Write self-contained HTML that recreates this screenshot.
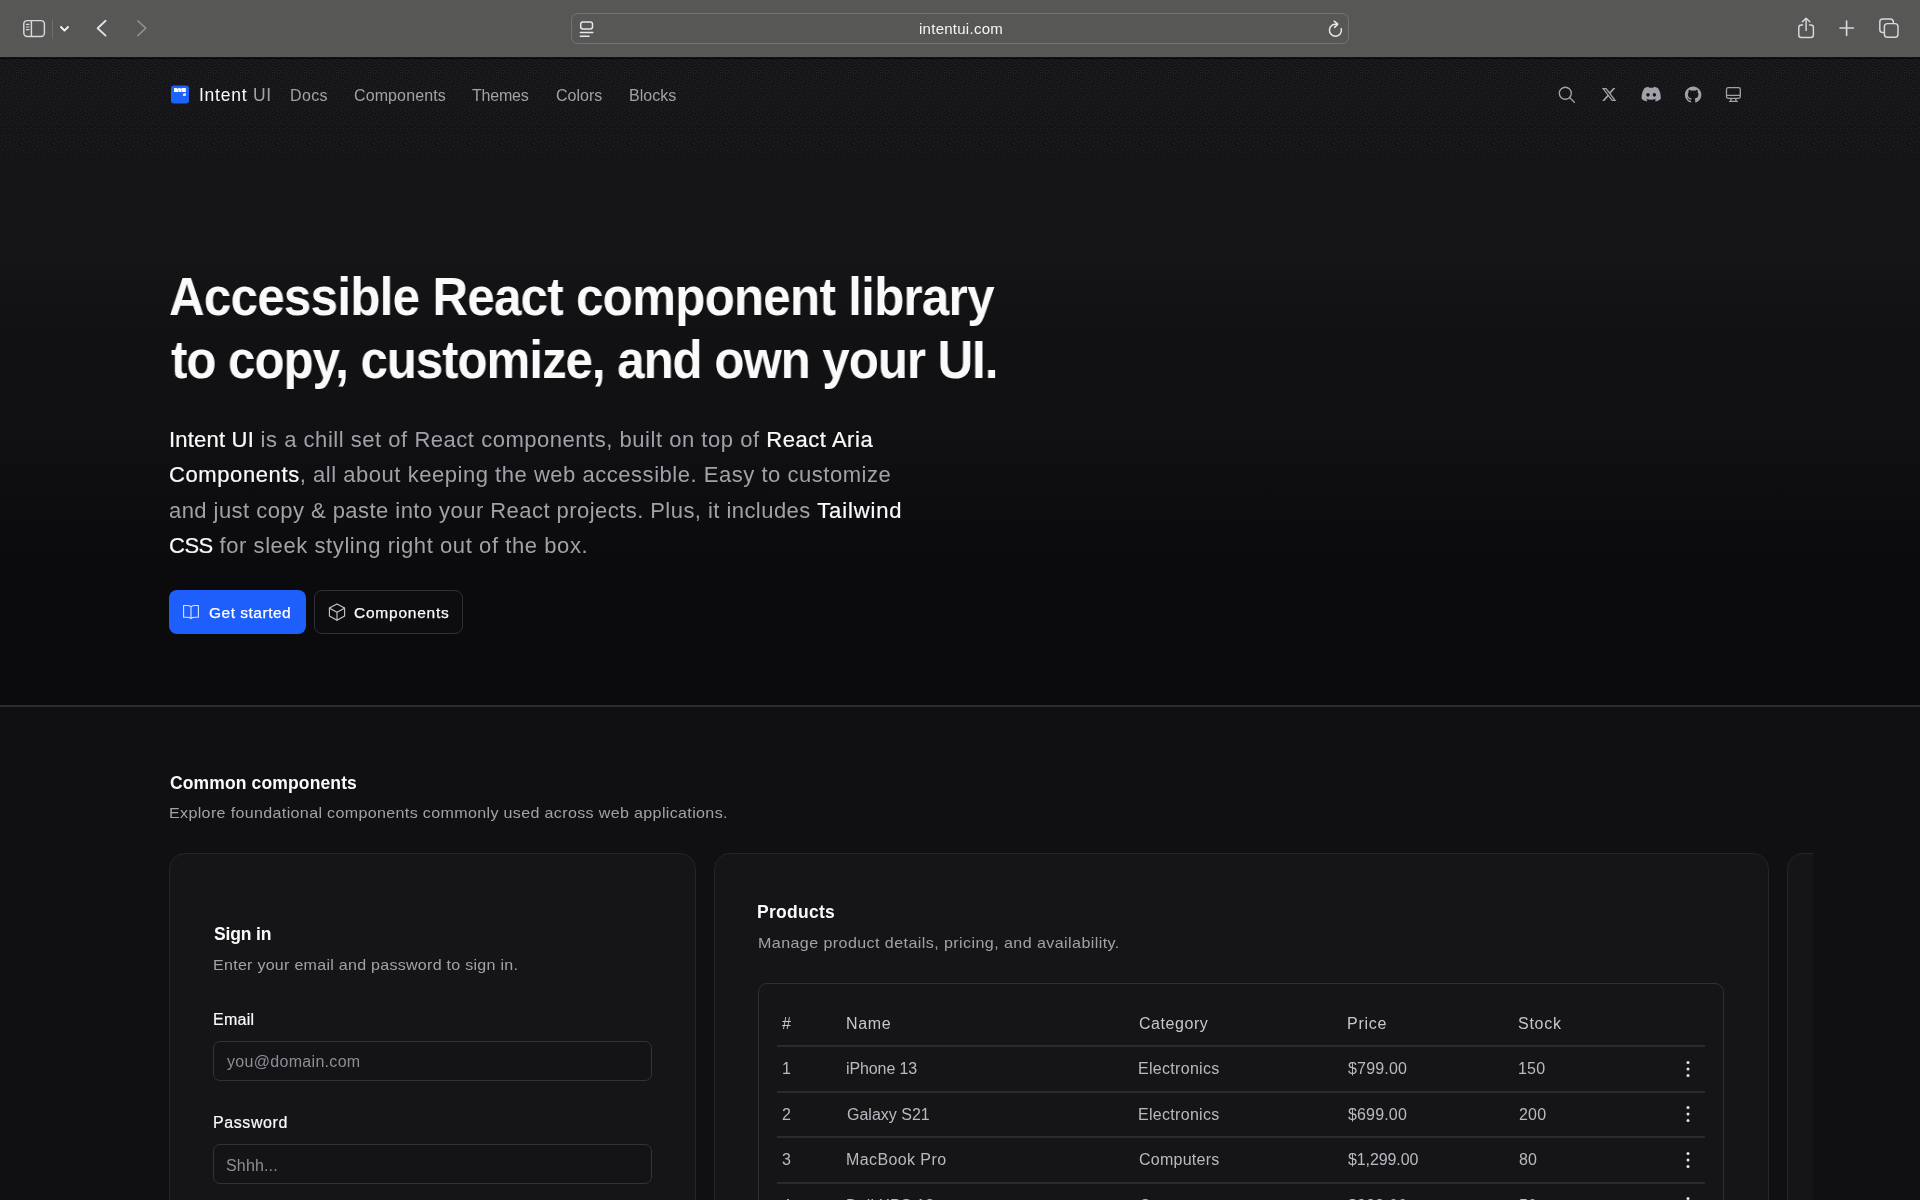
<!DOCTYPE html>
<html lang="en">
<head>
<meta charset="utf-8">
<title>Intent UI</title>
<style>
*{box-sizing:border-box;margin:0;padding:0}
html,body{width:1920px;height:1200px;overflow:hidden;background:#0b0b0d}
body{font-family:"Liberation Sans",sans-serif;color:#fafafa;position:relative}
.abs{position:absolute;white-space:nowrap}
.t{will-change:transform}
.t b{color:#fafafa;font-weight:400;-webkit-text-stroke:.22px #fafafa}
#chrome{position:absolute;left:0;top:0;width:1920px;height:57px;background:#575755}
#chromeline{position:absolute;left:0;top:57px;width:1920px;height:2px;background:linear-gradient(180deg,#2a2a2b 0%,#050507 45%,#0b0b0d 100%)}
#urlbar{position:absolute;left:571px;top:13px;width:778px;height:31px;border-radius:6.5px;border:1px solid #727277;background:#575755}
#hero{position:absolute;left:0;top:59px;width:1920px;height:647px;background:linear-gradient(180deg,#151518 0%,#151518 30%,#111114 42%,#111114 55%,#0d0d0f 70%,#0b0b0d 78%,#0b0b0d 100%)}
#dots{position:absolute;left:0;top:59px;width:1920px;height:120px}
#divider{position:absolute;left:0;top:705px;width:1920px;height:1.5px;background:#2b2b30}
#lower{position:absolute;left:0;top:706px;width:1920px;height:494px;background:#101013}
.card{position:absolute;background:#151518;border:1px solid #242429;border-radius:16px}
.btn{position:absolute;top:590px;height:44px;border-radius:8px}
.inp{position:absolute;left:213px;width:438.5px;height:40px;border:1px solid #323238;border-radius:7px;background:#141417}
.rowline{position:absolute;left:777px;width:928px;height:2px;background:linear-gradient(180deg,#2d2d33,#26262b)}
</style>
</head>
<body>
<!-- browser chrome -->
<div id="chrome"></div>
<div id="chromeline"></div>
<div id="urlbar"></div>
<!-- page background -->
<div id="hero"></div>
<svg id="dots" width="1920" height="120" shape-rendering="crispEdges"><defs><pattern id="p0" width="32" height="32" patternUnits="userSpaceOnUse"><path fill="#242429" d="M23 15h1v1h-1zM16 28h1v1h-1zM5 18h1v1h-1zM26 1h1v1h-1zM28 25h1v1h-1zM7 1h1v1h-1zM1 12h1v1h-1zM7 26h1v1h-1zM9 6h1v1h-1zM23 27h1v1h-1zM13 16h1v1h-1zM16 5h1v1h-1zM17 22h1v1h-1zM10 21h1v1h-1zM18 11h1v1h-1zM8 11h1v1h-1zM25 10h1v1h-1zM2 26h1v1h-1zM29 15h1v1h-1zM0 1h1v1h-1zM11 29h1v1h-1zM28 5h1v1h-1zM4 8h1v1h-1zM21 20h1v1h-1zM23 5h1v1h-1zM21 1h1v1h-1zM1 20h1v1h-1zM27 19h1v1h-1zM13 9h1v1h-1zM13 1h1v1h-1zM18 16h1v1h-1zM30 29h1v1h-1z"/></pattern><linearGradient id="g0" x1="0" y1="0" x2="0" y2="1"><stop offset="0" stop-color="#fff"/><stop offset="0.870" stop-color="#fff"/><stop offset="1" stop-color="#000"/></linearGradient><mask id="m0" maskUnits="userSpaceOnUse" x="0" y="0" width="1920" height="108"><rect width="1920" height="108" fill="url(#g0)"/></mask><pattern id="p1" width="32" height="32" patternUnits="userSpaceOnUse"><path fill="#242429" d="M26 13h1v1h-1zM14 25h1v1h-1zM29 0h1v1h-1zM30 9h1v1h-1zM3 5h1v1h-1zM21 24h1v1h-1zM31 4h1v1h-1zM6 29h1v1h-1zM17 0h1v1h-1zM20 6h1v1h-1zM11 12h1v1h-1zM22 11h1v1h-1zM6 15h1v1h-1zM18 25h1v1h-1zM4 22h1v1h-1zM24 23h1v1h-1zM13 22h1v1h-1zM1 30h1v1h-1zM16 19h1v1h-1zM12 5h1v1h-1zM2 16h1v1h-1zM10 15h1v1h-1zM24 18h1v1h-1zM30 18h1v1h-1zM10 2h1v1h-1zM14 13h1v1h-1zM4 2h1v1h-1zM29 22h1v1h-1zM20 28h1v1h-1zM0 23h1v1h-1zM9 18h1v1h-1zM26 29h1v1h-1zM5 12h1v1h-1zM17 8h1v1h-1zM10 25h1v1h-1z"/></pattern><linearGradient id="g1" x1="0" y1="0" x2="0" y2="1"><stop offset="0" stop-color="#fff"/><stop offset="0.840" stop-color="#fff"/><stop offset="1" stop-color="#000"/></linearGradient><mask id="m1" maskUnits="userSpaceOnUse" x="0" y="0" width="1920" height="100"><rect width="1920" height="100" fill="url(#g1)"/></mask><pattern id="p2" width="32" height="32" patternUnits="userSpaceOnUse"><path fill="#242429" d="M24 31h1v1h-1zM6 5h1v1h-1zM31 26h1v1h-1zM27 8h1v1h-1zM20 14h1v1h-1zM12 19h1v1h-1zM28 11h1v1h-1zM7 22h1v1h-1zM23 8h1v1h-1zM1 8h1v1h-1zM19 3h1v1h-1zM21 17h1v1h-1zM14 30h1v1h-1zM20 9h1v1h-1zM4 31h1v1h-1zM9 31h1v1h-1zM7 8h1v1h-1zM10 9h1v1h-1zM26 16h1v1h-1z"/></pattern><linearGradient id="g2" x1="0" y1="0" x2="0" y2="1"><stop offset="0" stop-color="#fff"/><stop offset="0.821" stop-color="#fff"/><stop offset="1" stop-color="#000"/></linearGradient><mask id="m2" maskUnits="userSpaceOnUse" x="0" y="0" width="1920" height="78"><rect width="1920" height="78" fill="url(#g2)"/></mask><pattern id="p3" width="32" height="32" patternUnits="userSpaceOnUse"><path fill="#242429" d="M28 13h1v1h-1zM0 10h1v1h-1zM19 23h1v1h-1zM3 28h1v1h-1zM25 25h1v1h-1zM5 25h1v1h-1zM22 29h1v1h-1zM25 21h1v1h-1zM16 17h1v1h-1zM12 3h1v1h-1zM28 29h1v1h-1zM18 29h1v1h-1zM24 3h1v1h-1zM19 21h1v1h-1zM16 15h1v1h-1zM0 18h1v1h-1zM7 3h1v1h-1zM19 0h1v1h-1zM7 24h1v1h-1zM13 28h1v1h-1zM23 1h1v1h-1zM3 13h1v1h-1zM12 14h1v1h-1zM21 3h1v1h-1zM11 0h1v1h-1zM30 13h1v1h-1zM14 6h1v1h-1zM4 15h1v1h-1zM16 11h1v1h-1zM15 9h1v1h-1zM1 28h1v1h-1zM21 26h1v1h-1zM22 31h1v1h-1zM15 22h1v1h-1zM15 1h1v1h-1zM14 11h1v1h-1zM27 31h1v1h-1zM20 11h1v1h-1zM17 3h1v1h-1zM7 17h1v1h-1zM14 20h1v1h-1zM16 13h1v1h-1zM25 7h1v1h-1zM30 20h1v1h-1zM27 3h1v1h-1zM2 23h1v1h-1zM29 7h1v1h-1zM16 25h1v1h-1zM2 18h1v1h-1zM22 13h1v1h-1zM18 13h1v1h-1zM14 3h1v1h-1zM16 30h1v1h-1zM9 29h1v1h-1zM8 15h1v1h-1zM4 20h1v1h-1zM12 7h1v1h-1zM14 18h1v1h-1zM11 23h1v1h-1zM7 20h1v1h-1zM31 15h1v1h-1zM1 6h1v1h-1zM11 17h1v1h-1zM3 10h1v1h-1zM9 4h1v1h-1zM18 27h1v1h-1zM9 27h1v1h-1zM2 1h1v1h-1zM26 27h1v1h-1zM28 17h1v1h-1zM8 13h1v1h-1zM23 25h1v1h-1zM22 22h1v1h-1zM7 31h1v1h-1zM30 2h1v1h-1zM1 4h1v1h-1zM18 19h1v1h-1zM23 20h1v1h-1zM27 23h1v1h-1zM12 25h1v1h-1zM31 7h1v1h-1zM26 5h1v1h-1zM9 23h1v1h-1zM5 10h1v1h-1zM24 12h1v1h-1zM1 14h1v1h-1zM18 6h1v1h-1zM5 27h1v1h-1zM24 29h1v1h-1zM11 27h1v1h-1zM20 30h1v1h-1zM27 21h1v1h-1zM31 31h1v1h-1zM30 11h1v1h-1zM30 24h1v1h-1zM29 27h1v1h-1z"/></pattern><linearGradient id="g3" x1="0" y1="0" x2="0" y2="1"><stop offset="0" stop-color="#fff"/><stop offset="0.200" stop-color="#fff"/><stop offset="1" stop-color="#000"/></linearGradient><mask id="m3" maskUnits="userSpaceOnUse" x="0" y="0" width="1920" height="68"><rect width="1920" height="68" fill="url(#g3)"/></mask></defs><rect width="1920" height="108" fill="url(#p0)" mask="url(#m0)"/><rect width="1920" height="100" fill="url(#p1)" mask="url(#m1)"/><rect width="1920" height="78" fill="url(#p2)" mask="url(#m2)"/><rect width="1920" height="68" fill="url(#p3)" mask="url(#m3)"/></svg>
<div id="lower"></div>
<div id="divider"></div>
<!-- CHROME ICONS -->
<svg class="abs" style="left:0;top:0" width="1920" height="57" viewBox="0 0 1920 57" fill="none" stroke-linecap="round" stroke-linejoin="round">
<g stroke="#d8d8de" stroke-width="1.45">
<rect x="23.8" y="20.6" width="20.6" height="15.8" rx="3.4"/>
<path d="M31.4 20.8V36.2"/>
<path d="M26.4 24.4h2.6M26.4 27h2.6M26.4 29.6h2.6" stroke-width="1.1"/>
</g>
<path d="M52.5 19.5V38.5" stroke="#6d6d6f" stroke-width="1"/>
<path d="M61 27l3.5 3.6L68 27" stroke="#f4f4f5" stroke-width="1.9"/>
<path d="M105.6 20.8L97.6 28.2l8 7.4" stroke="#e0e0e5" stroke-width="1.9"/>
<path d="M137.8 20.8l8 7.4-8 7.4" stroke="#8e8e94" stroke-width="1.6"/>
<g stroke="#e8e8ec" stroke-width="1.5">
<rect x="580.7" y="22.1" width="11.8" height="6.8" rx="2.2"/>
<path d="M580.4 32.6h12.4M580.4 36.2h8.6"/>
<path d="M1341.2 28.6a6 6 0 1 1-4.4-4.2"/>
<path d="M1334.2 21.2l3.6 3-3.2 3.2"/>
</g>
<g stroke="#d8d8de" stroke-width="1.45">
<path d="M1802.600 25h-1.300a2.500 2.500 0 0 0-2.500 2.500v7.400a2.500 2.500 0 0 0 2.500 2.500h9.600a2.500 2.500 0 0 0 2.500-2.500v-7.400a2.500 2.500 0 0 0-2.500-2.500h-1.300"/>
<path d="M1806.1 30.4V18.4M1802.4 21.8l3.7-3.6 3.7 3.6"/>
<path d="M1840 28h13.400M1846.600 21v14.400" stroke-width="1.650"/>
<path d="M1883.4 32.6h-0.6a3 3 0 0 1-3-3v-7.6a3 3 0 0 1 3-3h7.6a3 3 0 0 1 3 3v0.8"/>
<rect x="1884.4" y="23.6" width="13.6" height="13.6" rx="3"/>
</g>
</svg>
<!-- NAV -->
<svg class="abs" style="left:171px;top:85px" width="18" height="19" viewBox="0 0 18 19"><rect x="0" y="0.600" width="18" height="17.900" rx="3" fill="#1c62fc"/><rect x="3" y="3" width="11.900" height="4" fill="#fdfdf8"/><rect x="6.300" y="3" width="1" height=".8" fill="#1c62fc"/><rect x="9.600" y="3" width="1.100" height=".8" fill="#1c62fc"/><rect x="7.200" y="5" width=".9" height="2" fill="#9aa6c8"/><rect x="10" y="5" width=".9" height="2" fill="#9aa6c8"/><rect x="11.900" y="8.250" width="3" height="2.650" fill="#ece6d2"/><rect x="11.900" y="8.250" width=".8" height=".8" fill="#1c62fc"/></svg>
<!-- NAV ICONS -->
<svg class="abs" style="left:1550px;top:80px" width="200" height="30" viewBox="1550 80 200 30" fill="none">
<g stroke="#a1a1aa" stroke-width="1.350" stroke-linecap="round">
<circle cx="1565.3" cy="93.2" r="6"/><path d="M1569.8 97.8l4.6 4.4"/>
</g>
<g transform="translate(1601.8 87.9) scale(0.672)"><path fill="#a1a1aa" d="M18.244 2.25h3.308l-7.227 8.26 8.502 11.24H16.17l-5.214-6.817L4.99 21.75H1.68l7.73-8.835L1.254 2.25H8.08l4.713 6.231zm-1.161 17.52h1.833L7.084 4.126H5.117z" transform="translate(-1.2 -2.2)"/></g>
<g transform="translate(1641.6 84.5) scale(0.8)"><path fill="#a1a1aa" d="M20.317 4.37a19.79 19.79 0 0 0-4.885-1.515.074.074 0 0 0-.079.037c-.21.375-.444.864-.608 1.25a18.27 18.27 0 0 0-5.487 0 12.64 12.64 0 0 0-.617-1.25.077.077 0 0 0-.079-.037A19.74 19.74 0 0 0 3.677 4.37a.07.07 0 0 0-.032.027C.533 9.046-.32 13.58.099 18.057a.082.082 0 0 0 .031.057 19.9 19.9 0 0 0 5.993 3.03.078.078 0 0 0 .084-.028c.462-.63.874-1.295 1.226-1.994a.076.076 0 0 0-.041-.106 13.1 13.1 0 0 1-1.872-.892.077.077 0 0 1-.008-.128c.126-.094.252-.192.372-.291a.074.074 0 0 1 .077-.01c3.928 1.793 8.18 1.793 12.062 0a.074.074 0 0 1 .078.01c.12.098.246.198.373.292a.077.077 0 0 1-.006.127 12.3 12.3 0 0 1-1.873.892.077.077 0 0 0-.041.107c.36.698.772 1.362 1.225 1.993a.076.076 0 0 0 .084.028 19.84 19.84 0 0 0 6.002-3.03.077.077 0 0 0 .032-.054c.5-5.177-.838-9.674-3.549-13.66a.061.061 0 0 0-.031-.03zM8.02 15.33c-1.183 0-2.157-1.085-2.157-2.419 0-1.333.956-2.419 2.157-2.419 1.21 0 2.176 1.096 2.157 2.42 0 1.333-.956 2.418-2.157 2.418zm7.975 0c-1.183 0-2.157-1.085-2.157-2.419 0-1.333.955-2.419 2.157-2.419 1.21 0 2.176 1.096 2.157 2.42 0 1.333-.946 2.418-2.157 2.418z"/></g>
<g transform="translate(1684.9 86.2) scale(0.6875)"><path fill="#a1a1aa" d="M12 .297c-6.63 0-12 5.373-12 12 0 5.303 3.438 9.8 8.205 11.385.6.113.82-.258.82-.577 0-.285-.01-1.04-.015-2.04-3.338.724-4.042-1.61-4.042-1.61C4.422 18.07 3.633 17.7 3.633 17.7c-1.087-.744.084-.729.084-.729 1.205.084 1.838 1.236 1.838 1.236 1.07 1.835 2.809 1.305 3.495.998.108-.776.417-1.305.76-1.605-2.665-.3-5.466-1.332-5.466-5.93 0-1.31.465-2.38 1.235-3.22-.135-.303-.54-1.523.105-3.176 0 0 1.005-.322 3.3 1.23.96-.267 1.98-.399 3-.405 1.02.006 2.04.138 3 .405 2.28-1.552 3.285-1.23 3.285-1.23.645 1.653.24 2.873.12 3.176.765.84 1.23 1.91 1.23 3.22 0 4.61-2.805 5.625-5.475 5.92.42.36.81 1.096.81 2.22 0 1.606-.015 2.896-.015 3.286 0 .315.21.69.825.57C20.565 22.092 24 17.592 24 12.297c0-6.627-5.373-12-12-12"/></g>
<g stroke="#a1a1aa" stroke-width="1.3" stroke-linejoin="round" stroke-linecap="round">
<rect x="1726.5" y="87.7" width="13.8" height="10.6" rx="1.8"/>
<path d="M1726.8 95.4h13.2M1731.2 98.6l-.5 2.6M1735.6 98.6l.5 2.6M1729.6 101.4h7.6"/>
</g>
</svg>
<!-- HERO -->
<div class="btn" style="left:169px;width:137px;background:#1e5efb"></div>
<div class="btn" style="left:314px;width:149px;background:#0d0d10;border:1px solid #2f2f35"></div>
<!-- BTN ICONS -->
<svg class="abs" style="left:182px;top:603px" width="18" height="18" viewBox="0 0 18 18" fill="none" stroke="#dbe4ff" stroke-width="1.1" stroke-linejoin="round" stroke-linecap="round"><path d="M9 3.6v12M9 3.6C8 2.9 6.6 2.5 5 2.5H1.6v11.8H5c1.6 0 3 .4 4 1.3 1-.9 2.4-1.3 4-1.3h3.4V2.5H13c-1.6 0-3 .4-4 1.100z"/></svg>
<svg class="abs" style="left:327px;top:602px" width="20" height="20" viewBox="0 0 20 20" fill="none" stroke="#c8c8cf" stroke-width="1.1" stroke-linejoin="round" stroke-linecap="round"><path d="M10 1.9l7.6 4.2v8l-7.600 4.200-7.600-4.200v-8z"/><path d="M2.600 6.200l7.400 4.100 7.400-4.100M10 10.300v7.800"/></svg>
<!-- SECTION -->
<div class="card" style="left:169px;top:853px;width:527px;height:400px"></div>
<div class="card" style="left:714px;top:853px;width:1055px;height:400px"></div>
<div class="card" style="left:1787px;top:853px;width:200px;height:400px"></div>
<div class="abs" style="left:1813px;top:840px;width:107px;height:360px;background:#101013"></div>
<div class="inp" style="top:1041px"></div>
<div class="inp" style="top:1144px"></div>
<div class="abs" style="left:758px;top:982.5px;width:966px;height:300px;border:1px solid #2f2f35;border-radius:9px"></div>
<div class="rowline" style="top:1045px"></div>
<div class="rowline" style="top:1091px"></div>
<div class="rowline" style="top:1136px"></div>
<div class="rowline" style="top:1182px"></div>
<svg class="abs" style="left:1684px;top:1058.6px" width="8" height="20" viewBox="0 0 8 20"><g fill="#e4e4e7"><circle cx="4" cy="3.4" r="1.5"/><circle cx="4" cy="10" r="1.5"/><circle cx="4" cy="16.600" r="1.5"/></g></svg>
<svg class="abs" style="left:1684px;top:1104.2px" width="8" height="20" viewBox="0 0 8 20"><g fill="#e4e4e7"><circle cx="4" cy="3.4" r="1.5"/><circle cx="4" cy="10" r="1.5"/><circle cx="4" cy="16.600" r="1.5"/></g></svg>
<svg class="abs" style="left:1684px;top:1149.5px" width="8" height="20" viewBox="0 0 8 20"><g fill="#e4e4e7"><circle cx="4" cy="3.4" r="1.5"/><circle cx="4" cy="10" r="1.5"/><circle cx="4" cy="16.600" r="1.5"/></g></svg>
<svg class="abs" style="left:1684px;top:1194.9px" width="8" height="20" viewBox="0 0 8 20"><g fill="#e4e4e7"><circle cx="4" cy="3.4" r="1.5"/><circle cx="4" cy="10" r="1.5"/><circle cx="4" cy="16.600" r="1.5"/></g></svg>
<div class="abs t" id="url" style="left:919.00px;top:19.00px;font-size:15px;line-height:20px;letter-spacing:0.261px;color:#f6f6f7">intentui.com</div>
<div class="abs t" id="intent" style="left:199.00px;top:85.00px;font-size:17.5px;line-height:21px;letter-spacing:0.750px;color:#fafafa">Intent <span style="color:#a1a1aa">UI</span></div>
<div class="abs t" id="n1" style="left:290.00px;top:86.00px;font-size:16px;line-height:20px;letter-spacing:0.341px;color:#a1a1aa">Docs</div>
<div class="abs t" id="n2" style="left:354.00px;top:86.00px;font-size:16px;line-height:20px;letter-spacing:0.111px;color:#a1a1aa">Components</div>
<div class="abs t" id="n3" style="left:472.00px;top:86.00px;font-size:16px;line-height:20px;letter-spacing:-0.200px;color:#a1a1aa">Themes</div>
<div class="abs t" id="n4" style="left:556.00px;top:86.00px;font-size:16px;line-height:20px;letter-spacing:0.000px;color:#a1a1aa">Colors</div>
<div class="abs t" id="n5" style="left:629.00px;top:86.00px;font-size:16px;line-height:20px;letter-spacing:0.000px;color:#a1a1aa">Blocks</div>
<div class="abs t" id="h1a" style="left:169.00px;top:266.00px;font-size:53px;line-height:62px;letter-spacing:-0.772px;color:#fafafa;font-weight:700;transform:scaleX(.93);transform-origin:0 0">Accessible React component library</div>
<div class="abs t" id="h1b" style="left:171.00px;top:329.00px;font-size:53px;line-height:62px;letter-spacing:-1.140px;color:#fafafa;font-weight:700;transform:scaleX(.93);transform-origin:0 0">to copy, customize, and own your UI.</div>
<div class="abs t" id="p1" style="left:169.00px;top:422.00px;font-size:22px;line-height:35.5px;letter-spacing:0.528px;color:#a1a1aa"><b style="letter-spacing:.2px">Intent UI</b> is a chill set of React components, built on top of <b style="letter-spacing:.55px">React Aria</b></div>
<div class="abs t" id="p2" style="left:169.00px;top:457.00px;font-size:22px;line-height:35.5px;letter-spacing:0.531px;color:#a1a1aa"><b style="letter-spacing:.6px">Components</b>, all about keeping the web accessible. Easy to customize</div>
<div class="abs t" id="p3" style="left:169.00px;top:493.00px;font-size:22px;line-height:35.5px;letter-spacing:0.447px;color:#a1a1aa">and just copy &amp; paste into your React projects. Plus, it includes <b style="letter-spacing:.85px">Tailwind</b></div>
<div class="abs t" id="p4" style="left:169.00px;top:528.00px;font-size:22px;line-height:35.5px;letter-spacing:0.582px;color:#a1a1aa"><b style="letter-spacing:-.5px">CSS</b> for sleek styling right out of the box.</div>
<div class="abs t" id="b1" style="left:209.00px;top:603.00px;font-size:15.5px;line-height:20px;letter-spacing:0.500px;color:#ffffff;-webkit-text-stroke:.25px #fff">Get started</div>
<div class="abs t" id="b2" style="left:354.00px;top:603.00px;font-size:15.5px;line-height:20px;letter-spacing:0.771px;color:#fafafa;-webkit-text-stroke:.25px #fafafa">Components</div>
<div class="abs t" id="common" style="left:170.00px;top:772.00px;font-size:17.5px;line-height:22px;letter-spacing:0.133px;color:#fafafa;font-weight:700">Common components</div>
<div class="abs t" id="explore" style="left:169.00px;top:803.00px;font-size:15px;line-height:20px;letter-spacing:0.326px;color:#a1a1aa;transform:scaleX(1.07);transform-origin:0 0">Explore foundational components commonly used across web applications.</div>
<div class="abs t" id="signin" style="left:214.00px;top:923.00px;font-size:17.5px;line-height:22px;letter-spacing:-0.162px;color:#fafafa;font-weight:700">Sign in</div>
<div class="abs t" id="enter" style="left:213.00px;top:955.00px;font-size:15px;line-height:20px;letter-spacing:0.245px;color:#a1a1aa;transform:scaleX(1.07);transform-origin:0 0">Enter your email and password to sign in.</div>
<div class="abs t" id="email" style="left:213.00px;top:1010.00px;font-size:16px;line-height:20px;letter-spacing:0.250px;color:#fafafa;-webkit-text-stroke:.2px #fafafa">Email</div>
<div class="abs t" id="ph1" style="left:227.00px;top:1052.00px;font-size:16px;line-height:20px;letter-spacing:0.308px;color:#8d8d96">you@domain.com</div>
<div class="abs t" id="pw" style="left:213.00px;top:1113.00px;font-size:16px;line-height:20px;letter-spacing:0.579px;color:#fafafa;-webkit-text-stroke:.2px #fafafa">Password</div>
<div class="abs t" id="ph2" style="left:226.00px;top:1156.00px;font-size:16px;line-height:20px;letter-spacing:0.161px;color:#8d8d96">Shhh...</div>
<div class="abs t" id="products" style="left:757.00px;top:901.00px;font-size:17.5px;line-height:22px;letter-spacing:0.278px;color:#fafafa;font-weight:700">Products</div>
<div class="abs t" id="manage" style="left:758.00px;top:933.00px;font-size:15px;line-height:20px;letter-spacing:0.397px;color:#a1a1aa;transform:scaleX(1.07);transform-origin:0 0">Manage product details, pricing, and availability.</div>
<div class="abs t" id="th0" style="left:782.00px;top:1014.00px;font-size:16px;line-height:20px;letter-spacing:0.000px;color:#c6c6cd">#</div>
<div class="abs t" id="th1" style="left:846.00px;top:1014.00px;font-size:16px;line-height:20px;letter-spacing:0.663px;color:#c6c6cd">Name</div>
<div class="abs t" id="th2" style="left:1139.00px;top:1014.00px;font-size:16px;line-height:20px;letter-spacing:0.556px;color:#c6c6cd">Category</div>
<div class="abs t" id="th3" style="left:1347.00px;top:1014.00px;font-size:16px;line-height:20px;letter-spacing:0.750px;color:#c6c6cd">Price</div>
<div class="abs t" id="th4" style="left:1518.00px;top:1014.00px;font-size:16px;line-height:20px;letter-spacing:0.750px;color:#c6c6cd">Stock</div>
<div class="abs t" id="r0c0" style="left:782.00px;top:1059.00px;font-size:16px;line-height:20px;letter-spacing:0.000px;color:#b9b9c1">1</div>
<div class="abs t" id="r0c1" style="left:846.00px;top:1059.00px;font-size:16px;line-height:20px;letter-spacing:-0.105px;color:#b9b9c1">iPhone 13</div>
<div class="abs t" id="r0c2" style="left:1138.00px;top:1059.00px;font-size:16px;line-height:20px;letter-spacing:0.300px;color:#b9b9c1">Electronics</div>
<div class="abs t" id="r0c3" style="left:1348.00px;top:1059.00px;font-size:16px;line-height:20px;letter-spacing:0.170px;color:#b9b9c1">$799.00</div>
<div class="abs t" id="r0c4" style="left:1518.00px;top:1059.00px;font-size:16px;line-height:20px;letter-spacing:0.200px;color:#b9b9c1">150</div>
<div class="abs t" id="r1c0" style="left:782.00px;top:1105.00px;font-size:16px;line-height:20px;letter-spacing:0.000px;color:#b9b9c1">2</div>
<div class="abs t" id="r1c1" style="left:847.00px;top:1105.00px;font-size:16px;line-height:20px;letter-spacing:-0.004px;color:#b9b9c1">Galaxy S21</div>
<div class="abs t" id="r1c2" style="left:1138.00px;top:1105.00px;font-size:16px;line-height:20px;letter-spacing:0.300px;color:#b9b9c1">Electronics</div>
<div class="abs t" id="r1c3" style="left:1348.00px;top:1105.00px;font-size:16px;line-height:20px;letter-spacing:0.164px;color:#b9b9c1">$699.00</div>
<div class="abs t" id="r1c4" style="left:1519.00px;top:1105.00px;font-size:16px;line-height:20px;letter-spacing:0.200px;color:#b9b9c1">200</div>
<div class="abs t" id="r2c0" style="left:782.00px;top:1150.00px;font-size:16px;line-height:20px;letter-spacing:0.000px;color:#b9b9c1">3</div>
<div class="abs t" id="r2c1" style="left:846.00px;top:1150.00px;font-size:16px;line-height:20px;letter-spacing:0.400px;color:#b9b9c1">MacBook Pro</div>
<div class="abs t" id="r2c2" style="left:1139.00px;top:1150.00px;font-size:16px;line-height:20px;letter-spacing:0.250px;color:#b9b9c1">Computers</div>
<div class="abs t" id="r2c3" style="left:1348.00px;top:1150.00px;font-size:16px;line-height:20px;letter-spacing:-0.105px;color:#b9b9c1">$1,299.00</div>
<div class="abs t" id="r2c4" style="left:1519.00px;top:1150.00px;font-size:16px;line-height:20px;letter-spacing:0.200px;color:#b9b9c1">80</div>
<div class="abs t" id="r3c0" style="left:782.00px;top:1196.00px;font-size:16px;line-height:20px;letter-spacing:0.000px;color:#b9b9c1">4</div>
<div class="abs t" id="r3c1" style="left:846.00px;top:1196.00px;font-size:16px;line-height:20px;letter-spacing:0.200px;color:#b9b9c1">Dell XPS 13</div>
<div class="abs t" id="r3c2" style="left:1139.00px;top:1196.00px;font-size:16px;line-height:20px;letter-spacing:0.200px;color:#b9b9c1">Computers</div>
<div class="abs t" id="r3c3" style="left:1348.00px;top:1196.00px;font-size:16px;line-height:20px;letter-spacing:0.200px;color:#b9b9c1">$999.00</div>
<div class="abs t" id="r3c4" style="left:1519.00px;top:1196.00px;font-size:16px;line-height:20px;letter-spacing:0.200px;color:#b9b9c1">50</div>
</body>
</html>
